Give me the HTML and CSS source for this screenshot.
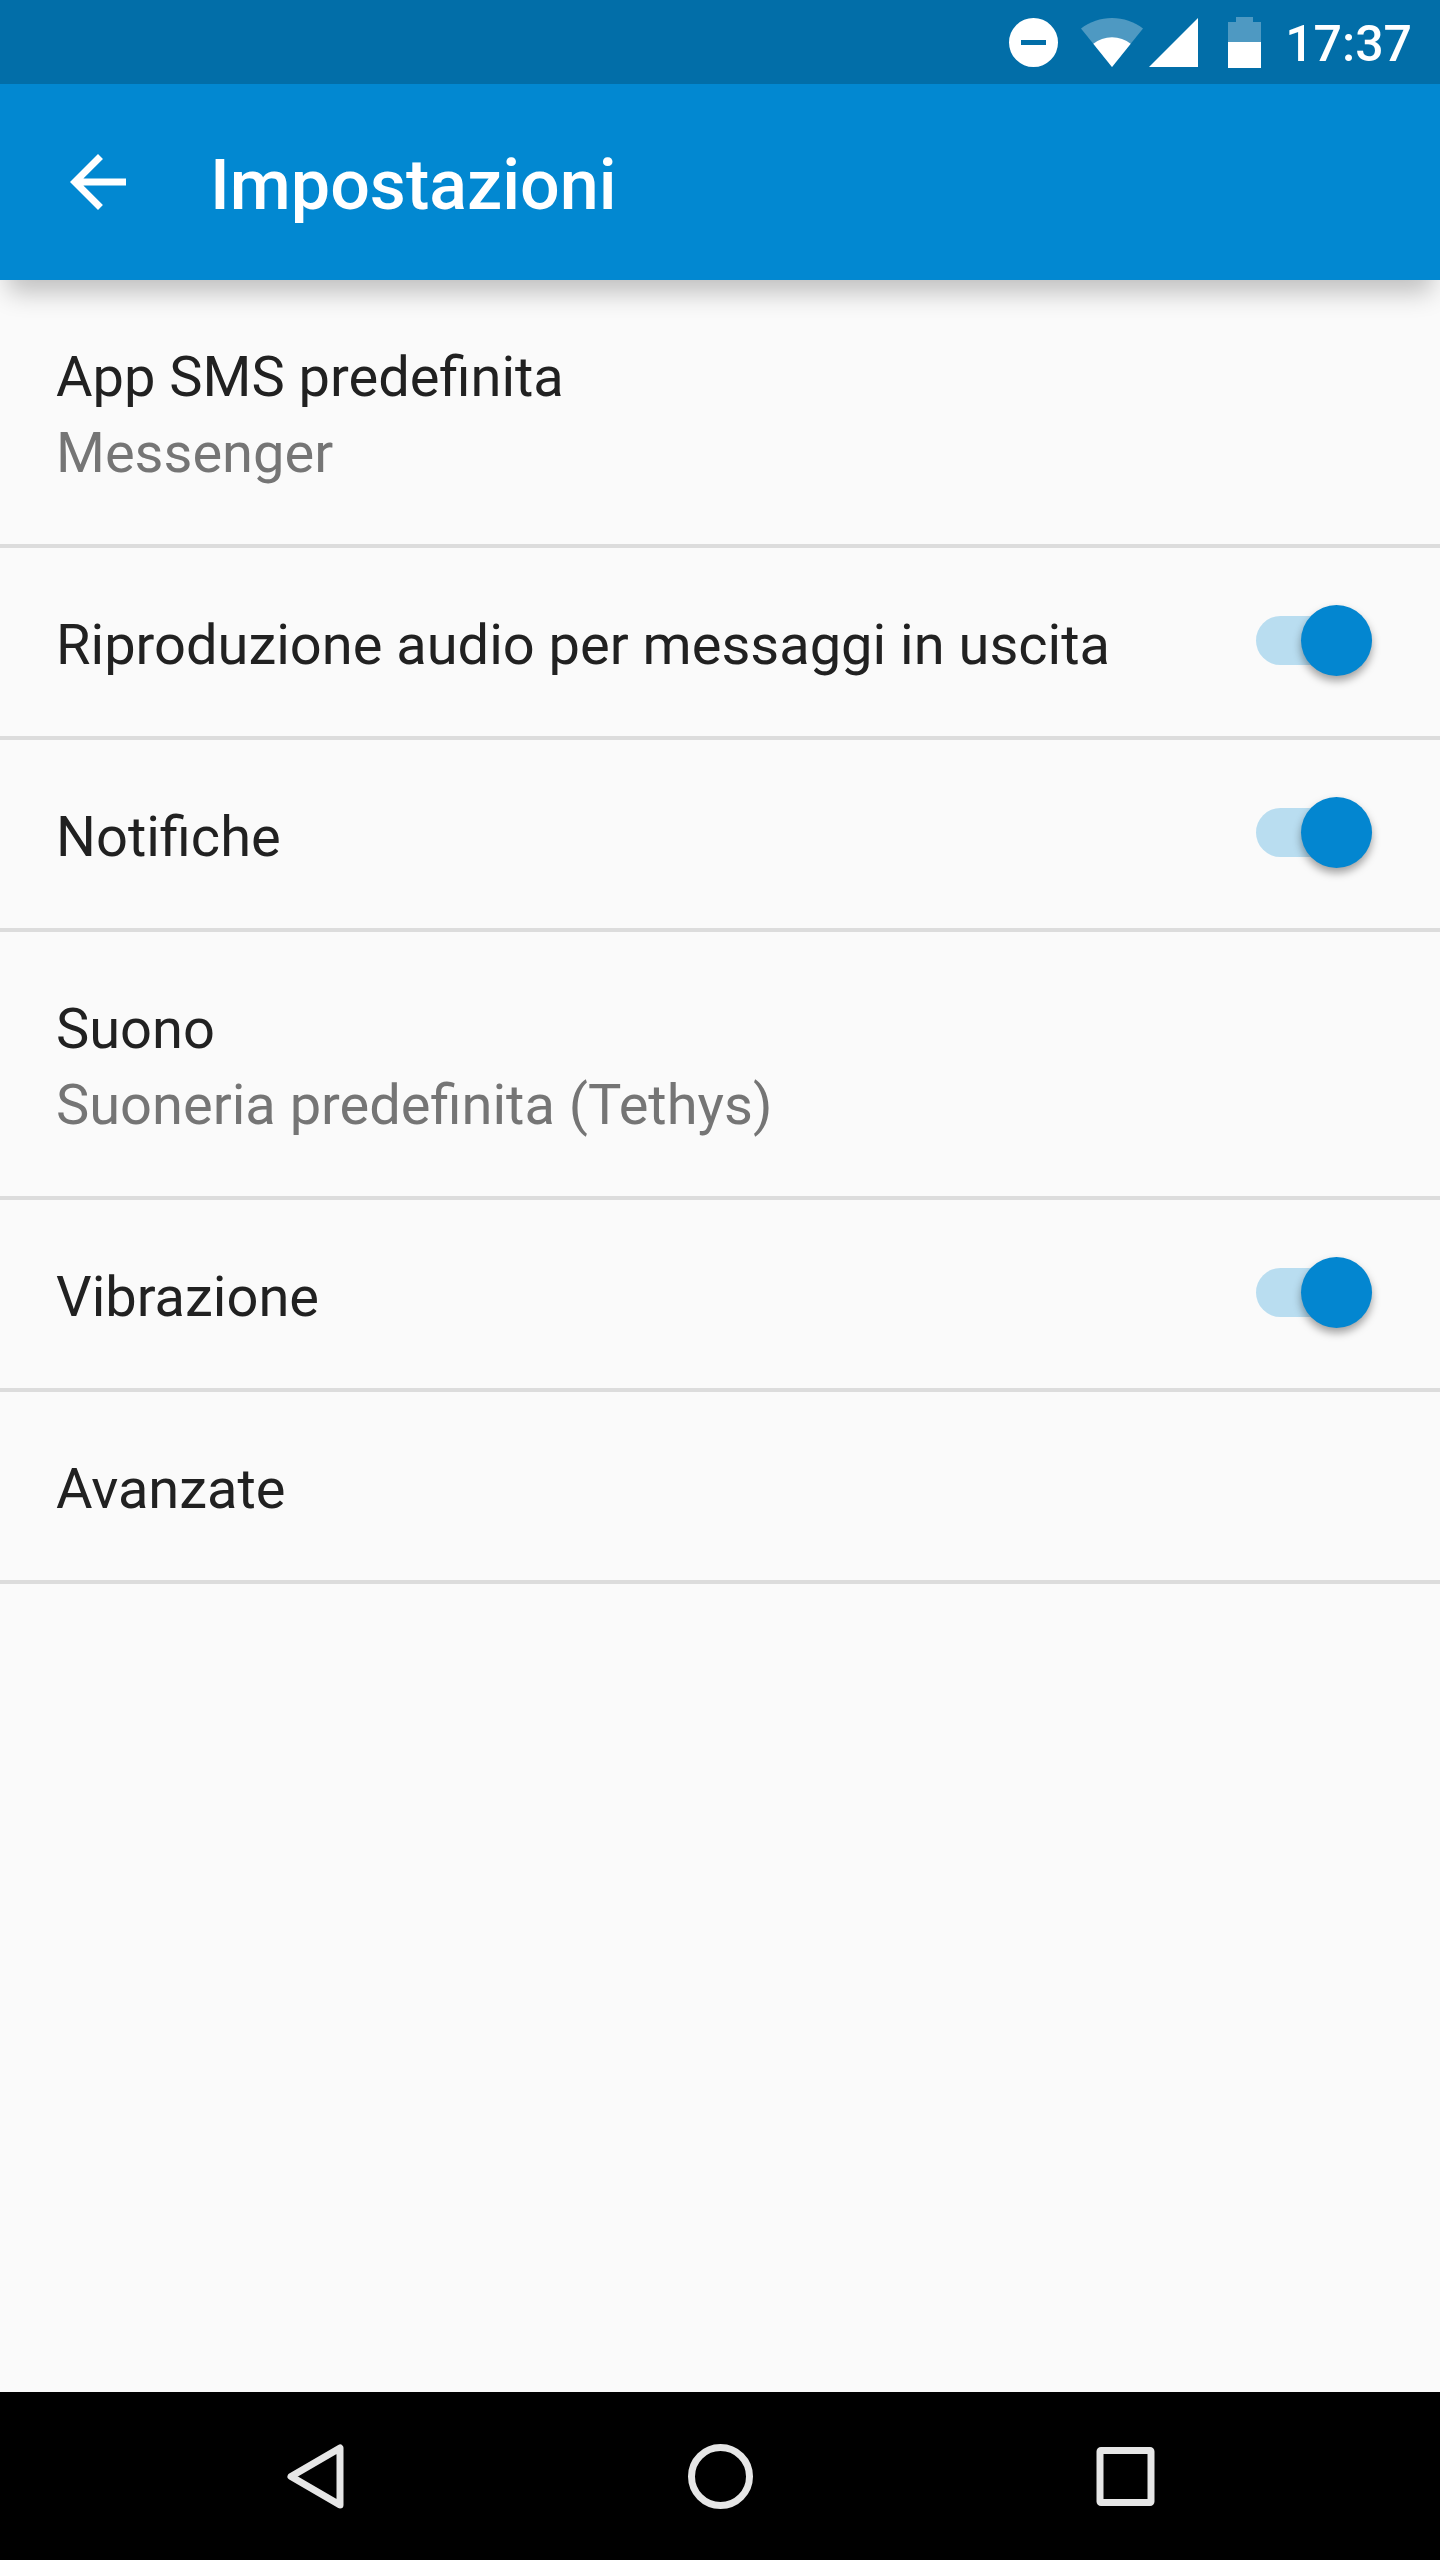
FILE: index.html
```html
<!DOCTYPE html>
<html lang="it">
<head>
<meta charset="utf-8">
<meta name="viewport" content="width=device-width, initial-scale=1">
<title>Impostazioni</title>
<link rel="stylesheet" href="styles.css">
</head>
<body>
<div class="status-bar">
  <svg class="status-dnd" width="49" height="49" viewBox="0 0 49 49" aria-hidden="true"><path fill="#fff" fill-rule="evenodd" d="M24.500 0a24.500 24.500 0 1 0 0 49a24.500 24.500 0 1 0 0-49zM12 22h25v5h-25z"/></svg>
  <svg class="status-wifi" width="62" height="49" viewBox="0 0 62 49" aria-hidden="true"><path fill="#fff" fill-opacity=".3" d="M31 49L0 10.500C9 3.700 19.500 0 31 0s22 3.700 31 10.500z"/><path fill="#fff" d="M31 49L12.300 25.700C17.500 21.500 24 19.300 31 19.300s13.500 2.200 18.700 6.400z"/></svg>
  <svg class="status-signal" width="49" height="49" viewBox="0 0 49 49" aria-hidden="true"><path fill="#fff" d="M0 49L49 0V49z"/></svg>
  <svg class="status-battery" width="33" height="51" viewBox="0 0 33 51" aria-hidden="true"><path fill="#fff" fill-opacity=".3" d="M0 5h8V0h17v5h8v20H0z"/><path fill="#fff" d="M0 25h33v26H0z"/></svg>
  <time class="clock">17:37</time>
</div>

<header class="app-bar">
  <button class="up-button" type="button" aria-label="Indietro">
    <svg width="84" height="84" viewBox="0 0 24 24" aria-hidden="true"><path fill="#fff" d="M20 11H7.830l5.590-5.590L12 4l-8 8 8 8 1.410-1.410L7.830 13H20v-2z"/></svg>
  </button>
  <h1 class="title">Impostazioni</h1>
</header>

<main class="settings">
  <a class="row" href="#sms"><span class="text"><span class="name">App SMS predefinita</span><span class="summary">Messenger</span></span></a>
  <label class="row"><span class="text">Riproduzione audio per messaggi in uscita</span><input class="switch" type="checkbox" role="switch" checked></label>
  <label class="row"><span class="text">Notifiche</span><input class="switch" type="checkbox" role="switch" checked></label>
  <a class="row" href="#suono"><span class="text"><span class="name">Suono</span><span class="summary">Suoneria predefinita (Tethys)</span></span></a>
  <label class="row"><span class="text">Vibrazione</span><input class="switch" type="checkbox" role="switch" checked></label>
  <a class="row" href="#avanzate"><span class="text">Avanzate</span></a>
</main>

<nav class="nav-bar" aria-label="Sistema">
  <button class="nav-button" type="button" aria-label="Indietro"><svg width="66" height="66" viewBox="0 0 66 66" aria-hidden="true"><path d="M9 33.500L58 5V62z"/></svg></button>
  <button class="nav-button" type="button" aria-label="Home"><svg width="66" height="66" viewBox="0 0 66 66" aria-hidden="true"><circle cx="33.500" cy="33.500" r="29"/></svg></button>
  <button class="nav-button" type="button" aria-label="Panoramica"><svg width="66" height="66" viewBox="0 0 66 66" aria-hidden="true"><rect x="8" y="7.500" width="51" height="52" rx="1"/></svg></button>
</nav>
</body>
</html>
```
FILE: styles.css
```css
* {
  box-sizing: border-box;
}

body {
  display: flex;
  flex-direction: column;
  min-height: 100vh;
  margin: 0;
  background: #fafafa;
  color: #212121;
  font-family: Roboto, sans-serif;
  font-size: 56px;
  line-height: 76px;
}

button {
  display: flex;
  align-items: center;
  justify-content: center;
  padding: 0;
  border: 0;
  background: none;
}

.status-bar {
  display: flex;
  align-items: center;
  justify-content: flex-end;
  height: 84px;
  padding-right: 28px;
  background: #026ea8;
}

.status-wifi {
  margin-left: 23px;
}

.status-signal {
  margin-left: 6px;
}

.status-battery {
  margin-left: 30px;
}

.clock {
  margin-left: 24px;
  padding-top: 4px;
  color: #fff;
  font-size: 50px;
  font-weight: 500;
}

.app-bar {
  display: flex;
  align-items: center;
  height: 196px;
  padding: 0 56px;
  background: #0288d1;
  box-shadow: 0 20px 24px -8px rgba(0, 0, 0, 0.24);
}

.title {
  margin: 0 0 0 70px;
  padding-top: 6px;
  color: #fff;
  font-size: 70px;
  font-weight: 500;
}

.settings {
  flex: 1;
}

.row {
  display: flex;
  align-items: center;
  justify-content: space-between;
  padding: 0 68px 0 56px;
  border-bottom: 4px solid #dcdcdc;
  color: inherit;
  text-decoration: none;
}

.text {
  display: flex;
  flex-direction: column;
  padding: 59px 0 53px;
}

.summary {
  color: #757575;
}

.switch {
  display: flex;
  flex: none;
  align-items: center;
  justify-content: flex-end;
  width: 116px;
  height: 49px;
  margin: 0 0 3px;
  border-radius: 25px;
  background: #dcdcdc;
  appearance: none;
}

.switch::before {
  content: "";
  flex: none;
  width: 71px;
  height: 71px;
  border-radius: 50%;
  background: #fafafa;
  box-shadow: 0 5px 8px rgba(0, 0, 0, 0.36);
}

.switch:not(:checked) {
  justify-content: flex-start;
}

.switch:checked {
  background: #b9ddf0;
}

.switch:checked::before {
  background: #0386d0;
}

.nav-bar {
  display: flex;
  height: 168px;
  padding: 0 112px;
  background: #000;
}

.nav-button {
  flex: 1;
}

.nav-button svg {
  fill: none;
  stroke: #e6e6e6;
  stroke-width: 7px;
  stroke-linejoin: round;
}
```
